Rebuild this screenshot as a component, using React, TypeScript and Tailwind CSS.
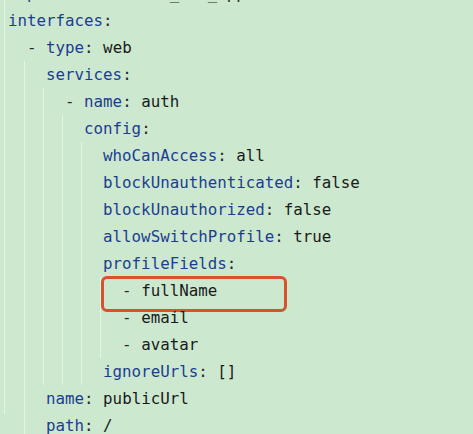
import React from 'react';

type Line = {
  cells: number; // indent units of 2 chars
  guides: number[]; // which cells draw a guide line
  key?: string;
  dash?: boolean;
  value?: string;
  colon?: boolean;
  boxed?: boolean;
};

const lines: Line[] = [
  { cells: 1, guides: [], key: 'provider', colon: true, value: 'local_dev_app' },
  { cells: 0, guides: [], key: 'interfaces', colon: true },
  { cells: 1, guides: [], dash: true, key: 'type', colon: true, value: 'web' },
  { cells: 2, guides: [1], key: 'services', colon: true },
  { cells: 3, guides: [1, 2], dash: true, key: 'name', colon: true, value: 'auth' },
  { cells: 4, guides: [1, 2, 3], key: 'config', colon: true },
  { cells: 5, guides: [1, 2, 3, 4], key: 'whoCanAccess', colon: true, value: 'all' },
  { cells: 5, guides: [1, 2, 3, 4], key: 'blockUnauthenticated', colon: true, value: 'false' },
  { cells: 5, guides: [1, 2, 3, 4], key: 'blockUnauthorized', colon: true, value: 'false' },
  { cells: 5, guides: [1, 2, 3, 4], key: 'allowSwitchProfile', colon: true, value: 'true' },
  { cells: 5, guides: [1, 2, 3, 4], key: 'profileFields', colon: true },
  { cells: 6, guides: [1, 2, 3, 4, 5], dash: true, value: 'fullName', boxed: true },
  { cells: 6, guides: [1, 2, 3, 4, 5], dash: true, value: 'email' },
  { cells: 6, guides: [1, 2, 3, 4, 5], dash: true, value: 'avatar' },
  { cells: 5, guides: [1, 2, 3, 4], key: 'ignoreUrls', colon: true, value: '[]' },
  { cells: 2, guides: [1], key: 'name', colon: true, value: 'publicUrl' },
  { cells: 2, guides: [1], key: 'path', colon: true, value: '/' },
];

const App: React.FC = () => {
  return (
    <div className="h-[434px] w-[473px] overflow-hidden bg-[#cce8cf]">
      <div
        className="ml-[4px] h-full border-l border-[#e3f3e4] -mt-0 text-[15.8px] leading-[27px]"
        style={{ fontFamily: '"DejaVu Sans Mono", "Liberation Mono", monospace' }}
      >
        <div className="-mt-[20.5px]">
          {lines.map((line, i) => (
            <div key={i} className="relative flex h-[27px] whitespace-pre">
              {Array.from({ length: line.cells }).map((_, c) => (
                <span
                  key={c}
                  className={
                    'h-full w-[2ch] shrink-0 ' +
                    (line.guides.includes(c) ? 'border-l border-[#e3f3e4]' : '')
                  }
                />
              ))}
              <span className="pl-[3px]">
                {line.dash && <span className="text-[#2a2a2a]">- </span>}
                {line.key && <span className="text-[#1c3d8f]">{line.key}</span>}
                {line.colon && <span className="text-[#2a2a2a]">:</span>}
                {line.value && <span className="text-[#1a1a1a]">{(line.key ? ' ' : '') + line.value}</span>}
              </span>
              {line.boxed && (
                <div className="absolute left-[96px] top-[-0.5px] h-[36px] w-[186px] rounded-[6px] border-[3px] border-[#d6532d]" />
              )}
            </div>
          ))}
        </div>
      </div>
    </div>
  );
};

export default App;
